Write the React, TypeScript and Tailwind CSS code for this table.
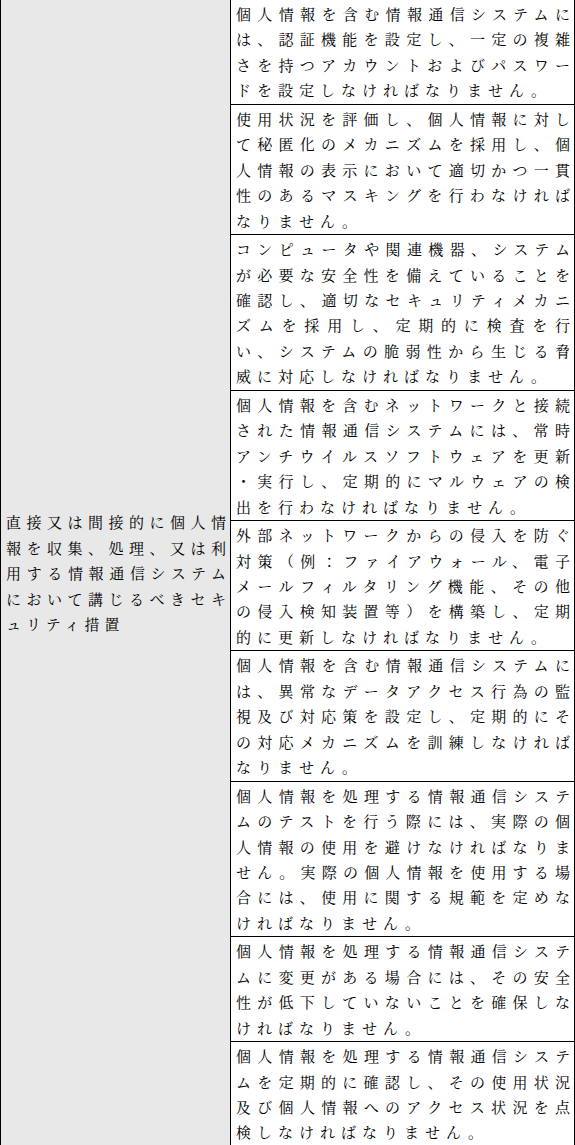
import React from 'react';

const rows: string[][] = [
  [
    '個人情報を含む情報通信システムに',
    'は、認証機能を設定し、一定の複雑',
    'さを持つアカウントおよびパスワー',
    'ドを設定しなければなりません。',
  ],
  [
    '使用状況を評価し、個人情報に対し',
    'て秘匿化のメカニズムを採用し、個',
    '人情報の表示において適切かつ一貫',
    '性のあるマスキングを行わなければ',
    'なりません。',
  ],
  [
    'コンピュータや関連機器、システム',
    'が必要な安全性を備えていることを',
    '確認し、適切なセキュリティメカニ',
    'ズムを採用し、定期的に検査を行',
    'い、システムの脆弱性から生じる脅',
    '威に対応しなければなりません。',
  ],
  [
    '個人情報を含むネットワークと接続',
    'された情報通信システムには、常時',
    'アンチウイルスソフトウェアを更新',
    '・実行し、定期的にマルウェアの検',
    '出を行わなければなりません。',
  ],
  [
    '外部ネットワークからの侵入を防ぐ',
    '対策（例：ファイアウォール、電子',
    'メールフィルタリング機能、その他',
    'の侵入検知装置等）を構築し、定期',
    '的に更新しなければなりません。',
  ],
  [
    '個人情報を含む情報通信システムに',
    'は、異常なデータアクセス行為の監',
    '視及び対応策を設定し、定期的にそ',
    'の対応メカニズムを訓練しなければ',
    'なりません。',
  ],
  [
    '個人情報を処理する情報通信システ',
    'ムのテストを行う際には、実際の個',
    '人情報の使用を避けなければなりま',
    'せん。実際の個人情報を使用する場',
    '合には、使用に関する規範を定めな',
    'ければなりません。',
  ],
  [
    '個人情報を処理する情報通信システ',
    'ムに変更がある場合には、その安全',
    '性が低下していないことを確保しな',
    'ければなりません。',
  ],
  [
    '個人情報を処理する情報通信システ',
    'ムを定期的に確認し、その使用状況',
    '及び個人情報へのアクセス状況を点',
    '検しなければなりません。',
  ],
];

const heading = [
  '直接又は間接的に個人情',
  '報を収集、処理、又は利',
  '用する情報通信システム',
  'において講じるべきセキ',
  'ュリティ措置',
];

// lines are broken by hand, full lines spread to the cell edge like the Word layout
const Lines: React.FC<{ lines: string[]; spacing: string }> = ({ lines, spacing }) => (
  <>
    {lines.map((line, i) =>
      i < lines.length - 1 ? (
        <div key={i} className="text-justify [text-align-last:justify] whitespace-nowrap">
          {line}
        </div>
      ) : (
        <div key={i} className={`whitespace-nowrap ${spacing}`}>
          {line}
        </div>
      )
    )}
  </>
);

export default function App() {
  return (
    <div
      className="w-[575px] bg-white text-black text-[15px] leading-[25.45px]"
      style={{ fontFamily: '"Noto Serif CJK JP", "Noto Sans CJK JP", sans-serif' }}
    >
      <div className="grid grid-cols-[230px_1fr] border-l border-r border-b border-black w-[575px]">
        <div className="bg-[#e8e8e8] border-r border-black flex items-center pl-[5px] pr-[4px]">
          <div className="w-full">
            <Lines lines={heading} spacing="tracking-[5px]" />
          </div>
        </div>
        <div className="flex flex-col">
          {rows.map((row, i) => (
            <div
              key={i}
              className={`pl-[5px] pr-[4px] pt-px pb-px ${i < rows.length - 1 ? 'border-b border-black' : ''}`}
            >
              <Lines lines={row} spacing="tracking-[6px]" />
            </div>
          ))}
        </div>
      </div>
    </div>
  );
}
